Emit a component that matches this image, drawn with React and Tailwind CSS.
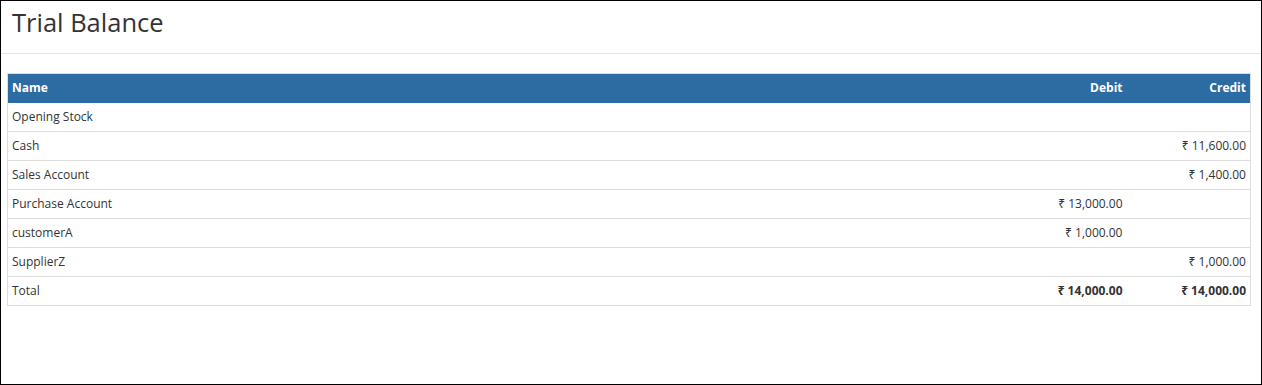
import React from "react";

const rows = [
  { name: "Opening Stock", debit: "", credit: "" },
  { name: "Cash", debit: "", credit: "₹ 11,600.00" },
  { name: "Sales Account", debit: "", credit: "₹ 1,400.00" },
  { name: "Purchase Account", debit: "₹ 13,000.00", credit: "" },
  { name: "customerA", debit: "₹ 1,000.00", credit: "" },
  { name: "SupplierZ", debit: "", credit: "₹ 1,000.00" },
];

const App = () => {
  return (
    <div
      className="w-[1262px] h-[385px] border border-black bg-white text-[#333333]"
      style={{ fontFamily: "'Open Sans', 'Noto Sans', sans-serif" }}
    >
      <div className="h-[53px] border-b border-[#e5e5e5] pl-[11px] pt-[5px]">
        <h1 className="text-[25.5px] leading-[32px] text-[#333333]">Trial Balance</h1>
      </div>
      <div className="pt-[19px] px-[6px]">
        <table className="w-[1244px] border-collapse text-[12px] border border-[#dddddd]">
          <thead>
            <tr className="h-[29px] bg-[#2d6ca2] text-white font-bold">
              <th className="text-left pl-[4px]">Name</th>
              <th className="w-[124px] text-right pr-[4px]">Debit</th>
              <th className="w-[124px] text-right pr-[4px]">Credit</th>
            </tr>
          </thead>
          <tbody>
            {rows.map(r => (
              <tr key={r.name} className="h-[29px] border-b border-[#dddddd]">
                <td className="pl-[4px]">{r.name}</td>
                <td className="text-right pr-[4px]">{r.debit}</td>
                <td className="text-right pr-[4px]">{r.credit}</td>
              </tr>
            ))}
            <tr className="h-[29px]">
              <td className="pl-[4px]">Total</td>
              <td className="text-right pr-[4px] font-bold">₹ 14,000.00</td>
              <td className="text-right pr-[4px] font-bold">₹ 14,000.00</td>
            </tr>
          </tbody>
        </table>
      </div>
    </div>
  );
};

export default App;
